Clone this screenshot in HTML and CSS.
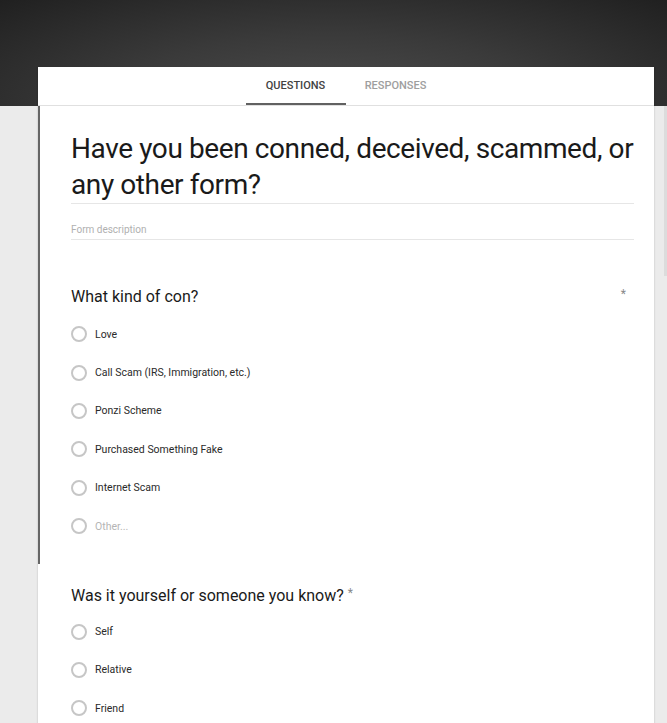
FILE: index.html
```html
<!DOCTYPE html>
<html lang="en">
<head>
    <meta charset="UTF-8">
    <meta name="viewport" content="width=device-width, initial-scale=1.0">
    <title>Form Editor</title>
    <link rel="stylesheet" href="styles.css">
</head>
<body>

    <div class="card">
        <!-- Tabs -->
        <div class="tabs">
            <div class="tab active">Questions</div>
            <div class="tab">Responses</div>
        </div>

        <!-- Selected block: title + first question -->
        <div class="selected">
            <div class="form-header">
                <h1 class="form-title">Have you been conned, deceived, scammed, or any other form?</h1>
                <div class="form-desc">Form description</div>
            </div>

            <div class="question first">
                <div class="question-head">
                    <span class="question-title">What kind of con?</span>
                    <span class="required">*</span>
                </div>
                <div class="option"><span class="radio"></span><span class="label">Love</span></div>
                <div class="option"><span class="radio"></span><span class="label">Call Scam (IRS, Immigration, etc.)</span></div>
                <div class="option"><span class="radio"></span><span class="label">Ponzi Scheme</span></div>
                <div class="option"><span class="radio"></span><span class="label">Purchased Something Fake</span></div>
                <div class="option"><span class="radio"></span><span class="label">Internet Scam</span></div>
                <div class="option"><span class="radio"></span><span class="label other">Other...</span></div>
            </div>
        </div>

        <div class="question second">
            <div class="question-head inline">
                <span class="question-title">Was it yourself or someone you know?</span>
                <span class="required">*</span>
            </div>
            <div class="option"><span class="radio"></span><span class="label">Self</span></div>
            <div class="option"><span class="radio"></span><span class="label">Relative</span></div>
            <div class="option"><span class="radio"></span><span class="label">Friend</span></div>
        </div>
    </div>

</body>
</html>
```

FILE: styles.css
```css
html, body {
    margin: 0;
    padding: 0;
}
body {
    font-family: Roboto, "Liberation Sans", Arial, sans-serif;
    background:
        radial-gradient(ellipse 75% 150% at 50% 100%, #4d4d4d 0%, #3a3a3a 45%, #1d1d1d 100%) top / 100% 106px no-repeat,
        linear-gradient(to left, #dcdcdc 0, #dcdcdc 3px, transparent 3px) right 106px / 100% 170px no-repeat,
        #ebebeb;
    height: 723px;
    overflow: hidden;
}
.card {
    background: white;
    width: 616px;
    margin: 67px 0 0 38px;
    box-shadow: 0 1px 2px rgba(0, 0, 0, 0.2);
    min-height: 660px;
}
.tabs {
    display: flex;
    justify-content: center;
    height: 38px;
    border-bottom: 1px solid #e0e0e0;
    padding-right: 1px;
}
.tab {
    width: 100px;
    text-align: center;
    font-size: 11px;
    font-weight: 500;
    text-transform: uppercase;
    color: #9e9e9e;
    line-height: 37px;
    border-bottom: 2px solid transparent;
}
.tab.active {
    color: #424242;
    border-bottom-color: #616161;
}
.selected {
    border-left: 2px solid #666;
    padding-bottom: 19px;
}
.form-header {
    padding: 25px 20px 0 31px;
}
.form-title {
    margin: 0;
    font-size: 28px;
    font-weight: 400;
    line-height: 36px;
    letter-spacing: -0.4px;
    color: #1a1a1a;
    border-bottom: 1px solid #e6e6e6;
}
.form-desc {
    margin-top: 16px;
    font-size: 10px;
    line-height: 19px;
    color: #b0b0b0;
    border-bottom: 1px solid #e6e6e6;
}
.question {
    padding-left: 33px;
    padding-right: 28px;
}
.selected .question {
    padding-left: 31px;
    padding-top: 47px;
}
.question.second {
    padding-top: 22px;
}
.question-head {
    display: flex;
    justify-content: space-between;
    align-items: flex-start;
    line-height: 20px;
    margin-bottom: 8px;
}
.question-head.inline {
    justify-content: flex-start;
    gap: 4px;
    margin-bottom: 6px;
}
.question-title {
    font-size: 16px;
    color: #1a1a1a;
}
.required {
    font-size: 12px;
    line-height: 14px;
    color: #888;
}
.option {
    display: flex;
    align-items: center;
    height: 38.4px;
}
.radio {
    width: 12px;
    height: 12px;
    border: 2px solid #c6c6c6;
    border-radius: 50%;
    margin-right: 8px;
    flex-shrink: 0;
}
.label {
    font-size: 10.5px;
    color: #2a2a2a;
}
.label.other {
    color: #b5b5b5;
}
```
